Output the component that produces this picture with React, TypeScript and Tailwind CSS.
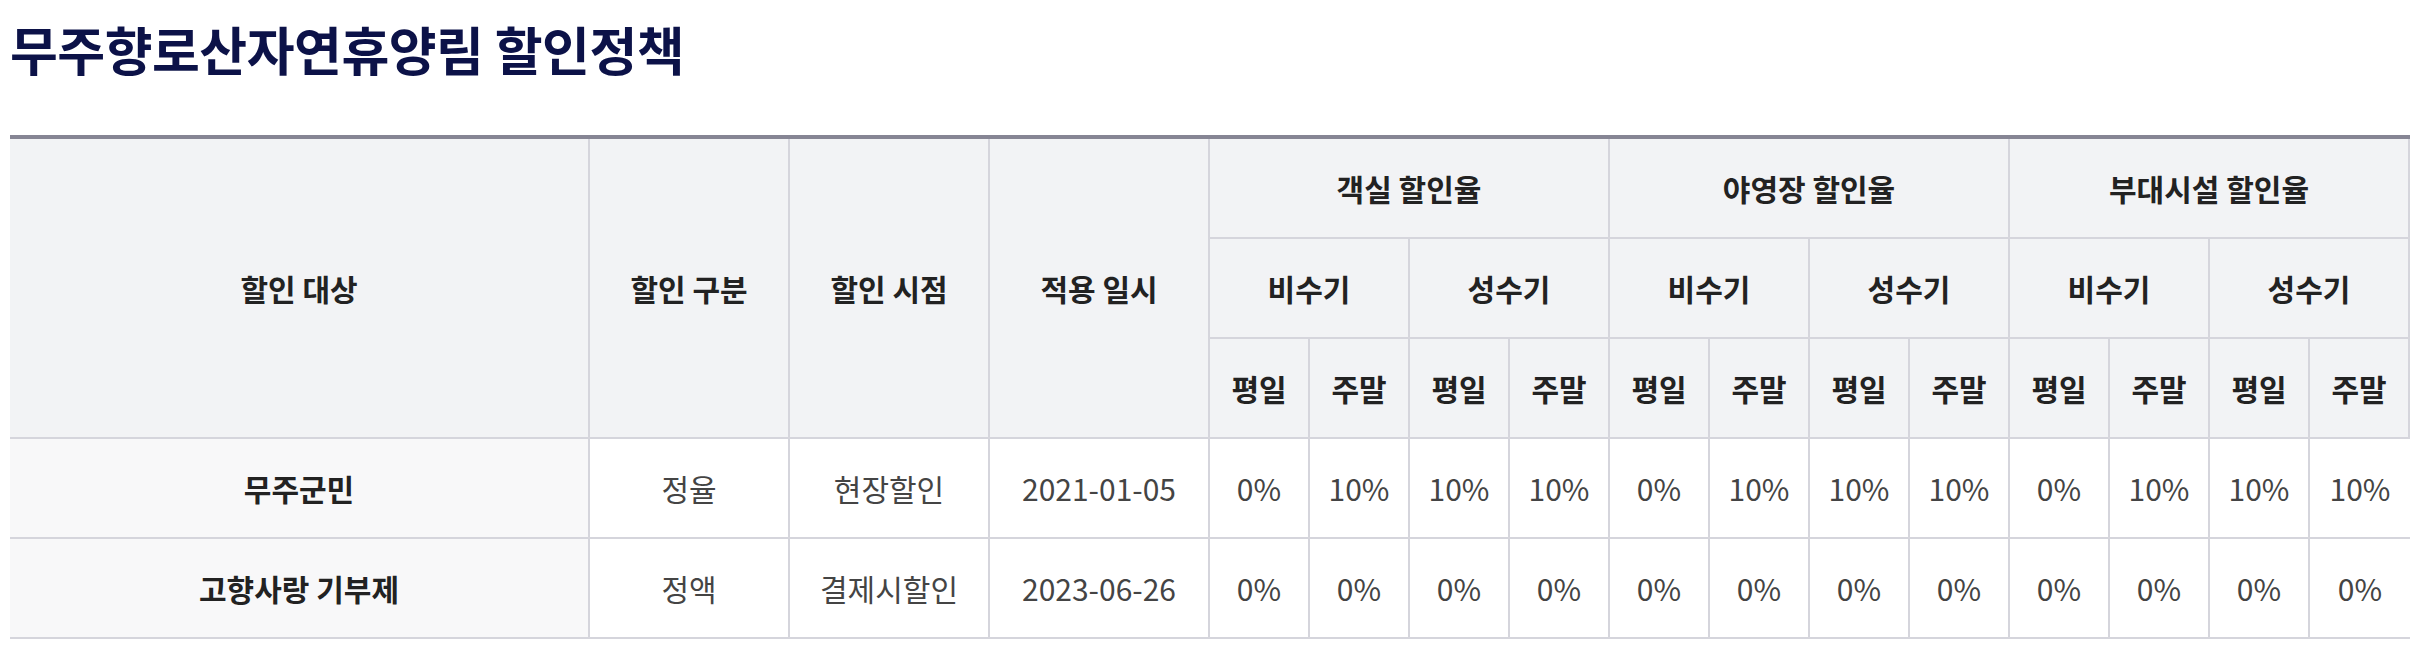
import React from "react";

const seasons = ["비수기", "성수기"];
const days = ["평일", "주말"];
const groups = ["객실 할인율", "야영장 할인율", "부대시설 할인율"];

const rows = [
  {
    target: "무주군민",
    kind: "정율",
    when: "현장할인",
    date: "2021-01-05",
    vals: ["0%", "10%", "10%", "10%", "0%", "10%", "10%", "10%", "0%", "10%", "10%", "10%"],
  },
  {
    target: "고향사랑 기부제",
    kind: "정액",
    when: "결제시할인",
    date: "2023-06-26",
    vals: ["0%", "0%", "0%", "0%", "0%", "0%", "0%", "0%", "0%", "0%", "0%", "0%"],
  },
];

const th =
  "flex items-center justify-center border-r-2 border-b-2 border-[#d5d5dc] bg-[#f2f3f5] text-[30px] font-bold text-[#222222] leading-none";

export default function App() {
  return (
    <div className="bg-white min-h-[666px] font-['Noto_Sans_CJK_KR','Noto_Sans',sans-serif]">
      <div className="pl-[10px] pt-[23px]">
        <h1 className="text-[52px] leading-[52px] font-bold text-[#0c1248] tracking-[-0.5px]">
          무주향로산자연휴양림 할인정책
        </h1>
        <div className="mt-[60px] w-[2400px] border-t-4 border-[#868594] grid grid-cols-[580px_200px_200px_220px_repeat(12,100px)] grid-rows-[100px_100px_100px_100px_100px]">
          <div className={`${th} row-span-3`}>할인 대상</div>
          <div className={`${th} row-span-3`}>할인 구분</div>
          <div className={`${th} row-span-3`}>할인 시점</div>
          <div className={`${th} row-span-3`}>적용 일시</div>
          {groups.map((g) => (
            <div key={g} className={`${th} col-span-4`}>
              {g}
            </div>
          ))}
          {groups.map((g) =>
            seasons.map((s) => (
              <div key={g + s} className={`${th} col-span-2`}>
                {s}
              </div>
            ))
          )}
          {groups.map((g) =>
            seasons.map((s) =>
              days.map((d) => (
                <div key={g + s + d} className={th}>
                  {d}
                </div>
              ))
            )
          )}
          {rows.map((r) => (
            <React.Fragment key={r.target}>
              <div className="flex items-center justify-center border-r-2 border-b-2 border-[#d5d5dc] bg-[#f8f8f9] text-[30px] font-bold text-[#222222] leading-none">
                {r.target}
              </div>
              {[r.kind, r.when, r.date].map((v, i) => (
                <div
                  key={i}
                  className="flex items-center justify-center border-r-2 border-b-2 border-[#d5d5dc] bg-white text-[30px] text-[#444444] leading-none"
                >
                  {v}
                </div>
              ))}
              {r.vals.map((v, i) => (
                <div
                  key={"v" + i}
                  className={
                    i === 11
                      ? "flex items-center justify-center border-b-2 border-[#d5d5dc] bg-white text-[30px] text-[#444444] leading-none"
                      : "flex items-center justify-center border-r-2 border-b-2 border-[#d5d5dc] bg-white text-[30px] text-[#444444] leading-none"
                  }
                >
                  {v}
                </div>
              ))}
            </React.Fragment>
          ))}
        </div>
      </div>
    </div>
  );
}
